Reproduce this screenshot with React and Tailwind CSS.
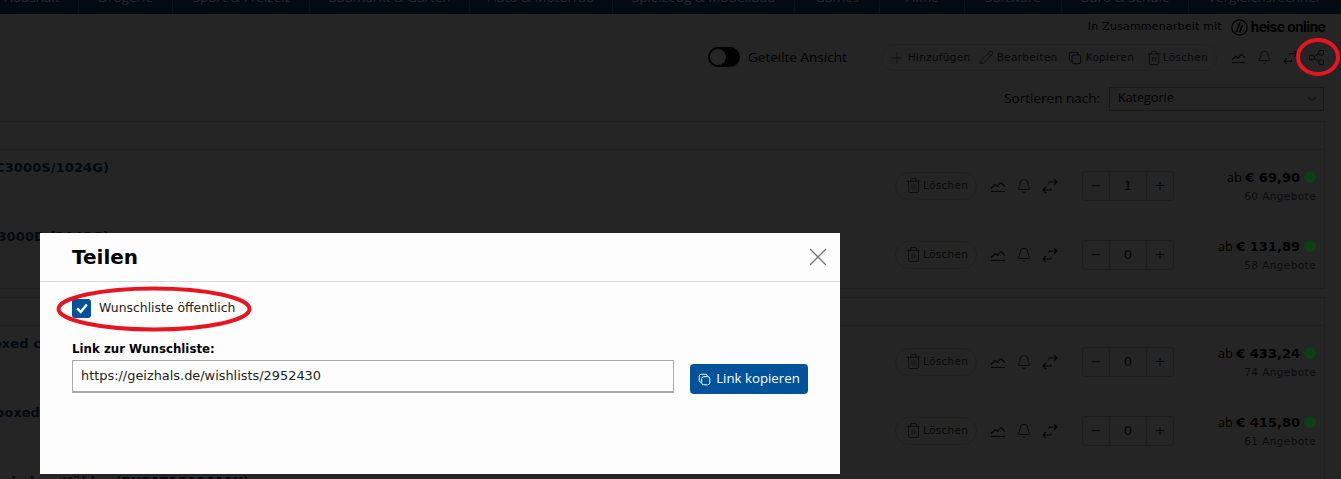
import { Plus, Pencil, Trash2, Bell, ChevronDown, X } from 'lucide-react'

const navItems = [
  ['Haushalt', 'w-[79px] pr-[15px]'],
  ['Drogerie', 'w-[94px]'],
  ['Sport & Freizeit', 'w-[137px]'],
  ['Baumarkt & Garten', 'w-[160px]'],
  ['Auto & Motorrad', 'w-[143px]'],
  ['Spielzeug & Modellbau', 'w-[182px]'],
  ['Games', 'w-[85px]'],
  ['Filme', 'w-[85px]'],
  ['Software', 'w-[97px]'],
  ['Büro & Schule', 'w-[127px]'],
  ['Vergleichsrechner', 'w-[152px]'],
]

const firstGroup = [
  { title: 'Kingston NV2 NVMe (SNV2SC3000S/1024G)', qty: 1, price: '€ 69,90', offers: 60 },
  { title: 'Kingston NV2 NVMe (SNV2SC3000D (2048G)', qty: 0, price: '€ 131,89', offers: 58 },
]

const secondGroup = [
  { title: 'Intel Core i7-12700K, boxed c', qty: 0, price: '€ 433,24', offers: 74, titleWidth: 'w-[41px]' },
  { title: 'Intel Core i7-12700KF, boxed', qty: 0, price: '€ 415,80', offers: 61, titleWidth: 'w-[40px]' },
  { title: 'Intel Core i5-12600K, boxed ohne Kühler (BX8071512600K)', qty: 0, price: '€ 289,00', offers: 70, titleWidth: 'w-[249px]' },
]

function ChartIcon({ className }) {
  return (
    <svg viewBox="0 0 16 16" fill="none" stroke="currentColor" strokeWidth="1.1" className={className}>
      <path d="M1 10.500 5 6.500 7.500 8.500 11 4.500 15 8.500" />
      <path d="M1 13.500h14" />
    </svg>
  )
}

function SwapIcon({ className }) {
  return (
    <svg viewBox="0 0 16 16" fill="none" stroke="currentColor" strokeWidth="1.1" className={className}>
      <path d="M6.500 5.500 7.500 4H15M12 1l3 3-3 3" />
      <path d="M9.500 10.500 8.500 12H1M4 9l-3 3 3 3" />
    </svg>
  )
}

function ShareIcon({ className }) {
  return (
    <svg viewBox="0 0 16 16" fill="none" stroke="currentColor" strokeWidth="1" className={className}>
      <rect x="0.5" y="5.5" width="5" height="5" rx="1" />
      <rect x="10.5" y="0.5" width="5" height="5" rx="1" />
      <rect x="10.5" y="10.5" width="5" height="5" rx="1" />
      <path d="M5.500 7 10.500 4M5.500 9l5 3" />
    </svg>
  )
}

function CopyIcon({ className }) {
  return (
    <svg viewBox="0 0 16 16" fill="none" stroke="currentColor" strokeWidth="1.2" className={className}>
      <rect x="4.5" y="4.5" width="10" height="10" rx="2.5" />
      <path d="M4 11.500A2.500 2.500 0 0 1 1.500 9V4A2.500 2.500 0 0 1 4 1.500h5A2.500 2.500 0 0 1 11.500 4" />
    </svg>
  )
}

function ToolButton({ icon, label, className }) {
  return (
    <span className={`flex items-center ${className}`}>
      {icon}
      <span>{label}</span>
    </span>
  )
}

function ProductRow({ title, qty, price, offers, titleWidth = 'w-[109px]' }) {
  return (
    <div className="flex h-[69px] items-center pt-[2px] pr-2">
      <div className={`flex ${titleWidth} shrink-0 justify-end self-start whitespace-nowrap pt-[6px] text-[13px] font-bold tracking-[0.1px] text-[#0b4a85]`}>
        {title}
      </div>
      <div className="ml-auto flex w-[421px] items-center">
        <span className="flex h-[28px] w-[82px] items-center gap-[1px] rounded-full border border-[#d8d8d8] pl-[9px] text-[10.500px] tracking-[0.3px] text-[#444]">
          <Trash2 size={17} strokeWidth={1.25} />
          Löschen
        </span>
        <span className="ml-[13px] flex w-[80px] items-center gap-[10px] text-[#222]">
          <ChartIcon className="size-[16px]" />
          <Bell size={16} strokeWidth={1.25} />
          <SwapIcon className="size-[16px]" />
        </span>
        <div className="ml-[12px] flex h-[30px] w-[92px] rounded-[3px] border border-[#ccc] text-[13px] text-[#222]">
          <span className="flex w-[27px] items-center justify-center border-r border-[#ccc]">−</span>
          <span className="flex flex-1 items-center justify-center border-r border-[#ccc]">{qty}</span>
          <span className="flex w-[26px] items-center justify-center">+</span>
        </div>
        <div className="ml-auto flex flex-col items-end">
          <div className="flex items-center gap-[4px] text-[13px] leading-[16px] text-black">
            <span className="whitespace-nowrap">
              <span className="font-['Open_Sans',sans-serif]">ab </span>
              <span className="font-bold">{price}</span>
            </span>
            <span className="relative z-20 size-[12px] rounded-full bg-[#0c3f16]" />
          </div>
          <div className="mt-[3px] text-[10.500px] leading-[14px] tracking-[0.4px] text-[#555]">{offers} Angebote</div>
        </div>
      </div>
    </div>
  )
}

function ProductGroup({ rows }) {
  return (
    <section className="border-y border-r border-[#dcdcdc]">
      <div className="h-[28px] border-b border-[#dcdcdc]" />
      {rows.map((row) => (
        <ProductRow key={row.price} {...row} />
      ))}
    </section>
  )
}

export default function App() {
  return (
    <div className="relative h-screen overflow-hidden bg-white font-['DejaVu_Sans',sans-serif] text-black">
      <nav className="flex h-[14px] items-end overflow-hidden bg-[#0e4c83] font-['Open_Sans',sans-serif] text-[13.500px] text-white">
        {navItems.map(([label, width]) => (
          <div key={label} className={`flex h-[14px] ${width} shrink-0 items-end justify-center border-r border-white/30 whitespace-nowrap`}>
            <span className="mb-[7px] leading-[20px]">{label}</span>
          </div>
        ))}
      </nav>

      <div className="flex h-[26px] items-center justify-end pr-[16px] text-[11px] tracking-[0.2px]">
        In Zusammenarbeit mit
        <svg viewBox="0 0 16 16" fill="none" stroke="currentColor" strokeWidth="1.2" className="ml-[9px] size-[17px]">
          <circle cx="8" cy="8" r="7.200" />
          <path d="M8.500 3 5 12.500M11 5.500 8 12.500" strokeWidth="1.600" />
        </svg>
        <span className="ml-[3px] font-['Roboto',sans-serif] text-[15px] font-bold tracking-[-0.6px]">heise online</span>
      </div>

      <div className="flex h-[34px] items-center pl-[708px]">
        <span className="flex h-[20px] w-[32px] items-center rounded-full bg-[#111]">
          <span className="ml-[2px] size-[16px] rounded-full bg-white" />
        </span>
        <span className="ml-[8px] font-['Open_Sans',sans-serif] text-[13.500px]">Geteilte Ansicht</span>
        <div className="mt-[1px] ml-[34px] flex h-[27px] w-[336px] items-center rounded-full border border-[#e0e0e0] pl-[6px] text-[10.500px] tracking-[0.3px] text-[#333]">
          <ToolButton icon={<Plus size={18} strokeWidth={1} className="mr-[2px]" />} label="Hinzufügen" className="w-[91px]" />
          <ToolButton icon={<Pencil size={15} strokeWidth={1.25} className="mr-[3px]" />} label="Bearbeiten" className="w-[89px]" />
          <ToolButton icon={<CopyIcon className="mr-[4px] size-[14px]" />} label="Kopieren" className="w-[78px]" />
          <ToolButton icon={<Trash2 size={16} strokeWidth={1.25} className="mr-[1px]" />} label="Löschen" />
        </div>
        <span className="mt-[1px] ml-[14px] flex items-center gap-[11px] text-[#222]">
          <ChartIcon className="size-[15px]" />
          <Bell size={15} strokeWidth={1.25} />
          <SwapIcon className="size-[15px]" />
          <ShareIcon className="size-[15px]" />
        </span>
      </div>

      <div className="flex h-[47px] items-center justify-end pt-[2px] pr-[17px] font-['Open_Sans',sans-serif] text-[13.500px]">
        <span>Sortieren nach:</span>
        <span className="ml-[9px] flex h-[24px] w-[215px] items-center justify-between border border-[#bbb] pr-[4px] pl-[8px] text-[12.500px]">
          Kategorie
          <ChevronDown size={14} strokeWidth={1} />
        </span>
      </div>

      <div className="mr-[16px] flex flex-col gap-[8px]">
        <ProductGroup rows={firstGroup} />
        <ProductGroup rows={secondGroup} />
      </div>

      {/* dim layer of the open dialog */}
      <div className="absolute inset-0 z-10 bg-black/[0.855]" />

      <div className="absolute top-[233px] left-[40px] z-20 h-[241px] w-[800px] bg-[#fdfdfd]">
        <header className="flex h-[49px] items-center justify-between border-b border-[#d8d8d8] pr-[7px] pl-[32px]">
          <h2 className="text-[20px] font-bold">Teilen</h2>
          <X size={30} strokeWidth={1.1} className="text-[#777]" />
        </header>
        <div className="pt-[17px] pr-[32px] pl-[32px]">
          <label className="flex h-[18px] items-center gap-[8px] text-[12.400px] text-[#222]">
            <span className="flex size-[19px] items-center justify-center rounded-[3px] bg-[#00539b] text-white">
              <svg viewBox="0 0 16 16" fill="none" stroke="currentColor" strokeWidth="2.800" className="size-[14px]">
                <path d="M2.500 8.500 6.500 12.500 13.500 4" />
              </svg>
            </span>
            Wunschliste öffentlich
          </label>
          <div className="mt-[24px] text-[11.800px] leading-[16px] font-bold">Link zur Wunschliste:</div>
          <div className="mt-[3px] flex items-start">
            <div className="flex h-[33px] w-[602px] items-center border border-b-2 border-[#aaa] pl-[8px] text-[12.900px] text-[#222]">
              https://geizhals.de/wishlists/2952430
            </div>
            <button className="mt-[4px] ml-[16px] flex h-[30px] w-[118px] items-center justify-center gap-[5px] rounded-[4px] bg-[#00539b] font-['Open_Sans',sans-serif] text-[13.250px] text-white">
              <CopyIcon className="size-[13px]" />
              Link kopieren
            </button>
          </div>
        </div>
      </div>

      {/* red marks drawn over the screenshot */}
      <svg viewBox="0 0 196 46" fill="none" className="absolute top-[286px] left-[56px] z-30 h-[46px] w-[196px]">
        <ellipse cx="98" cy="23" rx="95.500" ry="20.500" stroke="#e8141f" strokeWidth="4" />
      </svg>
      <svg viewBox="0 0 44 38" fill="none" className="absolute top-[38px] left-[1296px] z-30 h-[38px] w-[44px]">
        <ellipse cx="22" cy="19" rx="20" ry="17" stroke="#e8141f" strokeWidth="4" />
      </svg>
    </div>
  )
}
